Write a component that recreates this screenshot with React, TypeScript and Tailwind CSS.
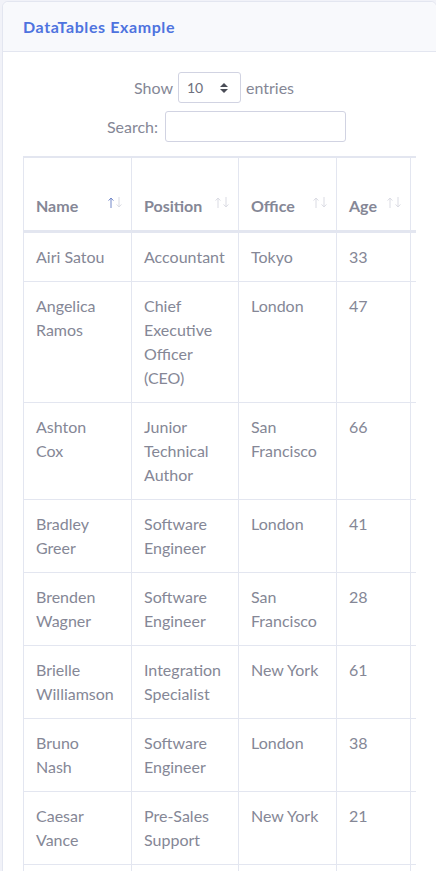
import React from "react";

type Row = { name: string[]; position: string[]; office: string[]; age: string };

const rows: Row[] = [
  { name: ["Airi Satou"], position: ["Accountant"], office: ["Tokyo"], age: "33" },
  { name: ["Angelica", "Ramos"], position: ["Chief", "Executive", "Officer", "(CEO)"], office: ["London"], age: "47" },
  { name: ["Ashton", "Cox"], position: ["Junior", "Technical", "Author"], office: ["San", "Francisco"], age: "66" },
  { name: ["Bradley", "Greer"], position: ["Software", "Engineer"], office: ["London"], age: "41" },
  { name: ["Brenden", "Wagner"], position: ["Software", "Engineer"], office: ["San", "Francisco"], age: "28" },
  { name: ["Brielle", "Williamson"], position: ["Integration", "Specialist"], office: ["New York"], age: "61" },
  { name: ["Bruno", "Nash"], position: ["Software", "Engineer"], office: ["London"], age: "38" },
  { name: ["Caesar", "Vance"], position: ["Pre-Sales", "Support"], office: ["New York"], age: "21" },
  { name: [], position: [], office: [], age: "" },
];

function Lines({ lines }: { lines: string[] }) {
  return (
    <>
      {lines.map((l, i) => (
        <div key={i} className="whitespace-nowrap">
          {l}
        </div>
      ))}
    </>
  );
}

function UpArrow({ color }: { color: string }) {
  return (
    <svg width="6" height="11" viewBox="0 0 6 11" fill="none">
      <path d="M3 1 V11 M0.6 3.6 L3 1 L5.4 3.6" stroke={color} strokeWidth="1" />
    </svg>
  );
}

function DownArrow({ color }: { color: string }) {
  return (
    <svg width="6" height="11" viewBox="0 0 6 11" fill="none">
      <path d="M3 0 V10 M0.6 7.4 L3 10 L5.4 7.4" stroke={color} strokeWidth="1" />
    </svg>
  );
}

function Th({ children, active }: { children?: React.ReactNode; active?: boolean }) {
  return (
    <th className="relative text-left align-bottom font-bold pt-3 pb-3 pl-3 pr-[30px] border-t border-r border-b-2 border-[#e3e6f0] leading-6">
      {children}
      <span className="absolute right-[17px] bottom-[22px] flex">
        <UpArrow color={active ? "#7388c9" : "#dadbe3"} />
      </span>
      <span className="absolute right-[9px] bottom-[22px] flex">
        <DownArrow color="#dadbe3" />
      </span>
    </th>
  );
}

function Td({ children }: { children?: React.ReactNode }) {
  return <td className="align-top p-3 border-t border-r border-[#e3e6f0] leading-6 h-[49px]">{children}</td>;
}

export default function App() {
  return (
    <div className="w-[436px] h-[871px] overflow-hidden bg-[#f1f2f8] pt-px pl-[2px] font-[Lato,sans-serif] text-[16px] text-[#858796]">
      <div className="w-[435px] bg-white border border-[#e3e6f0] rounded-[6px]">
        <div className="h-[50px] flex items-center px-5 bg-[#f8f9fc] border-b border-[#e3e6f0] rounded-t-[6px]">
          <h6 className="text-[16px] font-bold tracking-[0.6px] text-[#4e73df] leading-[1.2]">DataTables Example</h6>
        </div>
        <div className="p-5">
          <div className="w-[393px] overflow-hidden">
            <div className="flex items-center h-[31px] mb-2">
              <span className="w-[150px] text-right">Show</span>
              <div className="ml-[5px] w-[63px] h-[31px] flex items-center justify-between pl-2 pr-[12px] border border-[#d1d3e2] rounded-[3px] text-[14px] text-[#6e707e] bg-white">
                <span>10</span>
                <svg width="8" height="10" viewBox="0 0 4 5">
                  <path fill="#4a4d57" d="M2 0L0 2h4zm0 5L0 3h4z" />
                </svg>
              </div>
              <span className="ml-[5px]">entries</span>
            </div>
            <div className="flex items-center h-[31px] mb-[14px]">
              <span className="w-[135px] text-right">Search:</span>
              <input
                type="search"
                aria-label="Search"
                className="ml-[7px] w-[181px] h-[31px] border border-[#d1d3e2] rounded-[3px] bg-white px-2 text-[14px] outline-none"
              />
            </div>
            <table className="table-fixed w-[489px] border-separate border-spacing-0 border border-[#e3e6f0]">
              <colgroup>
                <col className="w-[108px]" />
                <col className="w-[107px]" />
                <col className="w-[98px]" />
                <col className="w-[74px]" />
                <col className="w-[100px]" />
              </colgroup>
              <thead>
                <tr>
                  <Th active>Name</Th>
                  <Th>Position</Th>
                  <Th>Office</Th>
                  <Th>Age</Th>
                  <Th>
                    <div className="h-[48px]" />
                  </Th>
                </tr>
              </thead>
              <tbody>
                {rows.map((r, i) => (
                  <tr key={i}>
                    <Td>
                      <Lines lines={r.name} />
                    </Td>
                    <Td>
                      <Lines lines={r.position} />
                    </Td>
                    <Td>
                      <Lines lines={r.office} />
                    </Td>
                    <Td>{r.age}</Td>
                    <Td />
                  </tr>
                ))}
              </tbody>
            </table>
          </div>
        </div>
      </div>
    </div>
  );
}
